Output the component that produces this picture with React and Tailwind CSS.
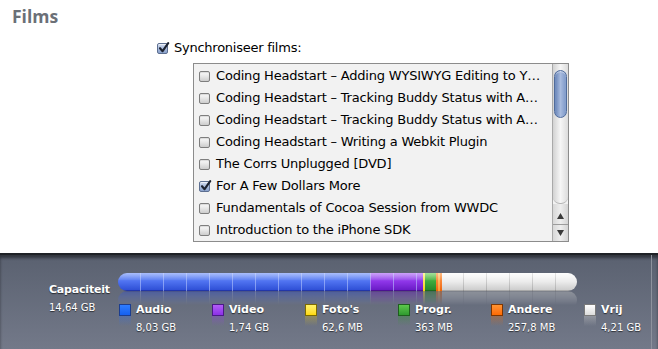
import React from "react";

function Box({ checked }) {
  if (checked) {
    return (
      <span className="relative inline-block w-[11px] h-[11px] shrink-0 rounded-[2px] border border-[#5d6f91] bg-gradient-to-b from-[#d3ddef] via-[#a9bbdc] to-[#8aa2cc] shadow-[inset_0_1px_0_rgba(255,255,255,0.6)]">
        <svg className="absolute left-[0px] top-[-2px]" width="12" height="12" viewBox="0 0 12 12">
          <path d="M2 6.2 L4.6 9.2 L10.2 1.2" fill="none" stroke="#1c2230" strokeWidth="2.1" strokeLinecap="round" strokeLinejoin="round" />
        </svg>
      </span>
    );
  }
  return (
    <span className="inline-block w-[11px] h-[11px] shrink-0 rounded-[2px] border border-[#7e7e7e] bg-gradient-to-b from-[#fbfbfb] via-[#e6e6e6] to-[#cdcdcd] shadow-[inset_0_1px_1px_rgba(0,0,0,0.12)]"></span>
  );
}

const rows = [
  { t: "Coding Headstart – Adding WYSIWYG Editing to Y…", c: false },
  { t: "Coding Headstart – Tracking Buddy Status with A…", c: false },
  { t: "Coding Headstart – Tracking Buddy Status with A…", c: false },
  { t: "Coding Headstart – Writing a Webkit Plugin", c: false },
  { t: "The Corrs Unplugged [DVD]", c: false },
  { t: "For A Few Dollars More", c: true },
  { t: "Fundamentals of Cocoa Session from WWDC", c: false },
  { t: "Introduction to the iPhone SDK", c: false },
];

const legend = [
  { n: "Audio", v: "8,03 GB", sw: "border-[#1b3d8f] bg-gradient-to-b from-[#2f7dff] to-[#1560f0]", rf: "bg-gradient-to-b from-[#3f6fd0]/70 to-transparent" },
  { n: "Video", v: "1,74 GB", sw: "border-[#4a1a86] bg-gradient-to-b from-[#b25cf7] to-[#8c2fe6]", rf: "bg-gradient-to-b from-[#8a4ad0]/70 to-transparent" },
  { n: "Foto's", v: "62,6 MB", sw: "border-[#7d6a00] bg-gradient-to-b from-[#fff266] to-[#ffd900]", rf: "bg-gradient-to-b from-[#c8b030]/70 to-transparent" },
  { n: "Progr.", v: "363 MB", sw: "border-[#1d5f1d] bg-gradient-to-b from-[#5cc84c] to-[#2f9a2f]", rf: "bg-gradient-to-b from-[#3f9040]/70 to-transparent" },
  { n: "Andere", v: "257,8 MB", sw: "border-[#7e3500] bg-gradient-to-b from-[#ff9330] to-[#ff6a00]", rf: "bg-gradient-to-b from-[#d06a20]/70 to-transparent" },
  { n: "Vrij", v: "4,21 GB", sw: "border-[#7a7a7a] bg-gradient-to-b from-[#ffffff] to-[#dcdcdc]", rf: "bg-gradient-to-b from-[#c8c8c8]/70 to-transparent" },
];

function BarSegments() {
  return (
    <div className="relative flex w-[459px] h-[18px] rounded-full overflow-hidden">
      <div className="w-[252px] shrink-0 h-full bg-gradient-to-b from-[#86a2f8] via-[#4f72f0] to-[#2f4fd6] border-b border-[#2236a8]"></div>
      <div className="w-[53px] shrink-0 h-full bg-gradient-to-b from-[#b77af6] via-[#8e35e8] to-[#6a1ac6] border-b border-[#4b1290]"></div>
      <div className="w-[2px] shrink-0 h-full bg-gradient-to-b from-[#fff27a] to-[#f2d200]"></div>
      <div className="w-[11px] shrink-0 h-full bg-gradient-to-b from-[#7fd46e] via-[#3caa3c] to-[#27882a] border-b border-[#1d6a1d]"></div>
      <div className="w-[6px] shrink-0 h-full flex">
        <div className="w-[2px] h-full bg-gradient-to-b from-[#ffa050] to-[#ee6400]"></div>
        <div className="w-[2px] h-full bg-gradient-to-b from-[#ffd080] to-[#ff9a30]"></div>
        <div className="w-[2px] h-full bg-gradient-to-b from-[#ffa050] to-[#ee6400]"></div>
      </div>
      <div className="flex-1 h-full bg-gradient-to-b from-[#fdfdfd] via-[#ececec] to-[#cdcdcd] border-b border-[#a8a8a8]"></div>
      <div className="absolute left-0 top-0 w-[305px] h-full bg-[repeating-linear-gradient(90deg,transparent_0px,transparent_22px,rgba(190,205,255,0.55)_22px,rgba(190,205,255,0.55)_23px)]"></div>
      <div className="absolute left-[324px] top-0 w-[135px] h-full bg-[repeating-linear-gradient(90deg,transparent_0px,transparent_21px,rgba(0,0,0,0.14)_21px,rgba(0,0,0,0.14)_22px,transparent_22px,transparent_23px)]"></div>
      <div className="absolute left-0 top-0 w-full h-[7px] bg-gradient-to-b from-white/30 to-white/5"></div>
    </div>
  );
}

export default function App() {
  return (
    <div className="w-[658px] h-[349px] overflow-hidden flex flex-col bg-white font-['DejaVu_Sans','Liberation_Sans',sans-serif]">
      <div className="h-[253px] shrink-0 flex flex-col">
        <h1 className="pl-[12px] pt-[4px] leading-[24px] text-[17.5px] font-bold text-[#6b7077] font-['Open_Sans','DejaVu_Sans',sans-serif]">
          Films
        </h1>
        <div className="mt-[12px] ml-[157px] flex items-center h-[16px]">
          <Box checked />
          <span className="ml-[6px] text-[13px] leading-[16px] tracking-[-0.25px] text-black">Synchroniseer films:</span>
        </div>
        <div className="mt-[7px] ml-[193px] w-[376px] h-[179px] border border-[#8c8c8c] bg-[#f2f2f2] flex">
          <div className="flex-1 pt-[1px] overflow-hidden">
            {rows.map((r, i) => (
              <div key={i} className="h-[22px] flex items-center pl-[5px]">
                <Box checked={r.c} />
                <span className="ml-[6px] whitespace-nowrap text-[13px] leading-[16px] tracking-[-0.2px] text-black">{r.t}</span>
              </div>
            ))}
          </div>
          <div className="w-[16px] shrink-0 flex flex-col border-l border-[#a9a9a9]">
            <div className="h-[140px] pt-[6px] pl-[1px] rounded-b-[7px] bg-gradient-to-r from-[#d2d2d2] via-[#f6f6f6] to-[#dcdcdc] border-b border-[#b4b4b4]">
              <div className="w-[13px] h-[48px] rounded-full border border-[#506c9c] bg-gradient-to-r from-[#6683b7] via-[#a8bbde] to-[#7d98c8] shadow-[inset_0_1px_1px_rgba(255,255,255,0.5)]"></div>
            </div>
            <div className="h-[21px] flex items-center justify-center border-b border-[#9c9c9c] bg-gradient-to-r from-[#d8d8d8] via-[#eeeeee] to-[#d4d4d4] pt-[3px]">
              <svg width="7" height="6" viewBox="0 0 7 6"><path d="M3.5 0 L7 6 L0 6 Z" fill="#3a3a3a" /></svg>
            </div>
            <div className="flex-1 flex items-center justify-center bg-gradient-to-r from-[#d8d8d8] via-[#eeeeee] to-[#d4d4d4]">
              <svg width="7" height="6" viewBox="0 0 7 6"><path d="M0 0 L7 0 L3.5 6 Z" fill="#3a3a3a" /></svg>
            </div>
          </div>
        </div>
      </div>

      <div className="h-[96px] shrink-0 flex border-t-[2px] border-[#1f2227] bg-gradient-to-b from-[#5a6170] to-[#737989] shadow-[inset_0_3px_3px_rgba(0,0,0,0.45)] text-white [text-shadow:0_1px_1px_rgba(0,0,0,0.6)]">
        <div className="w-[118px] shrink-0 pl-[49px] pt-[28px] flex flex-col">
          <div className="text-[11px] leading-[13px] font-bold tracking-[-0.2px] whitespace-nowrap">Capaciteit</div>
          <div className="mt-[6px] text-[10px] leading-[12px] whitespace-nowrap">14,64 GB</div>
        </div>
        <div className="flex-1 min-w-0 pt-[18px] flex flex-col">
          <div className="relative w-[459px] h-[18px] shrink-0">
            <BarSegments />
            <div className="absolute left-0 top-[18px] w-[459px] h-[14px] overflow-hidden opacity-40 [mask-image:linear-gradient(to_bottom,black,transparent)]">
              <div className="scale-y-[-1]">
                <BarSegments />
              </div>
            </div>
          </div>
          <div className="mt-[13px] ml-[1px] flex">
            {legend.map((l) => (
              <div key={l.n} className="w-[93px] shrink-0 flex items-start">
                <div className="flex flex-col shrink-0">
                  <div className={`w-[12px] h-[12px] border ${l.sw}`}></div>
                  <div className={`w-[12px] h-[10px] opacity-60 ${l.rf}`}></div>
                </div>
                <div className="ml-[5px] -mt-[1px] flex flex-col whitespace-nowrap">
                  <div className="text-[11px] leading-[13px] font-bold">{l.n}</div>
                  <div className="mt-[6px] text-[10px] leading-[12px]">{l.v}</div>
                </div>
              </div>
            ))}
          </div>
        </div>
        <div className="w-[7px] shrink-0 border-l border-[#8d929d]"></div>
      </div>
    </div>
  );
}
